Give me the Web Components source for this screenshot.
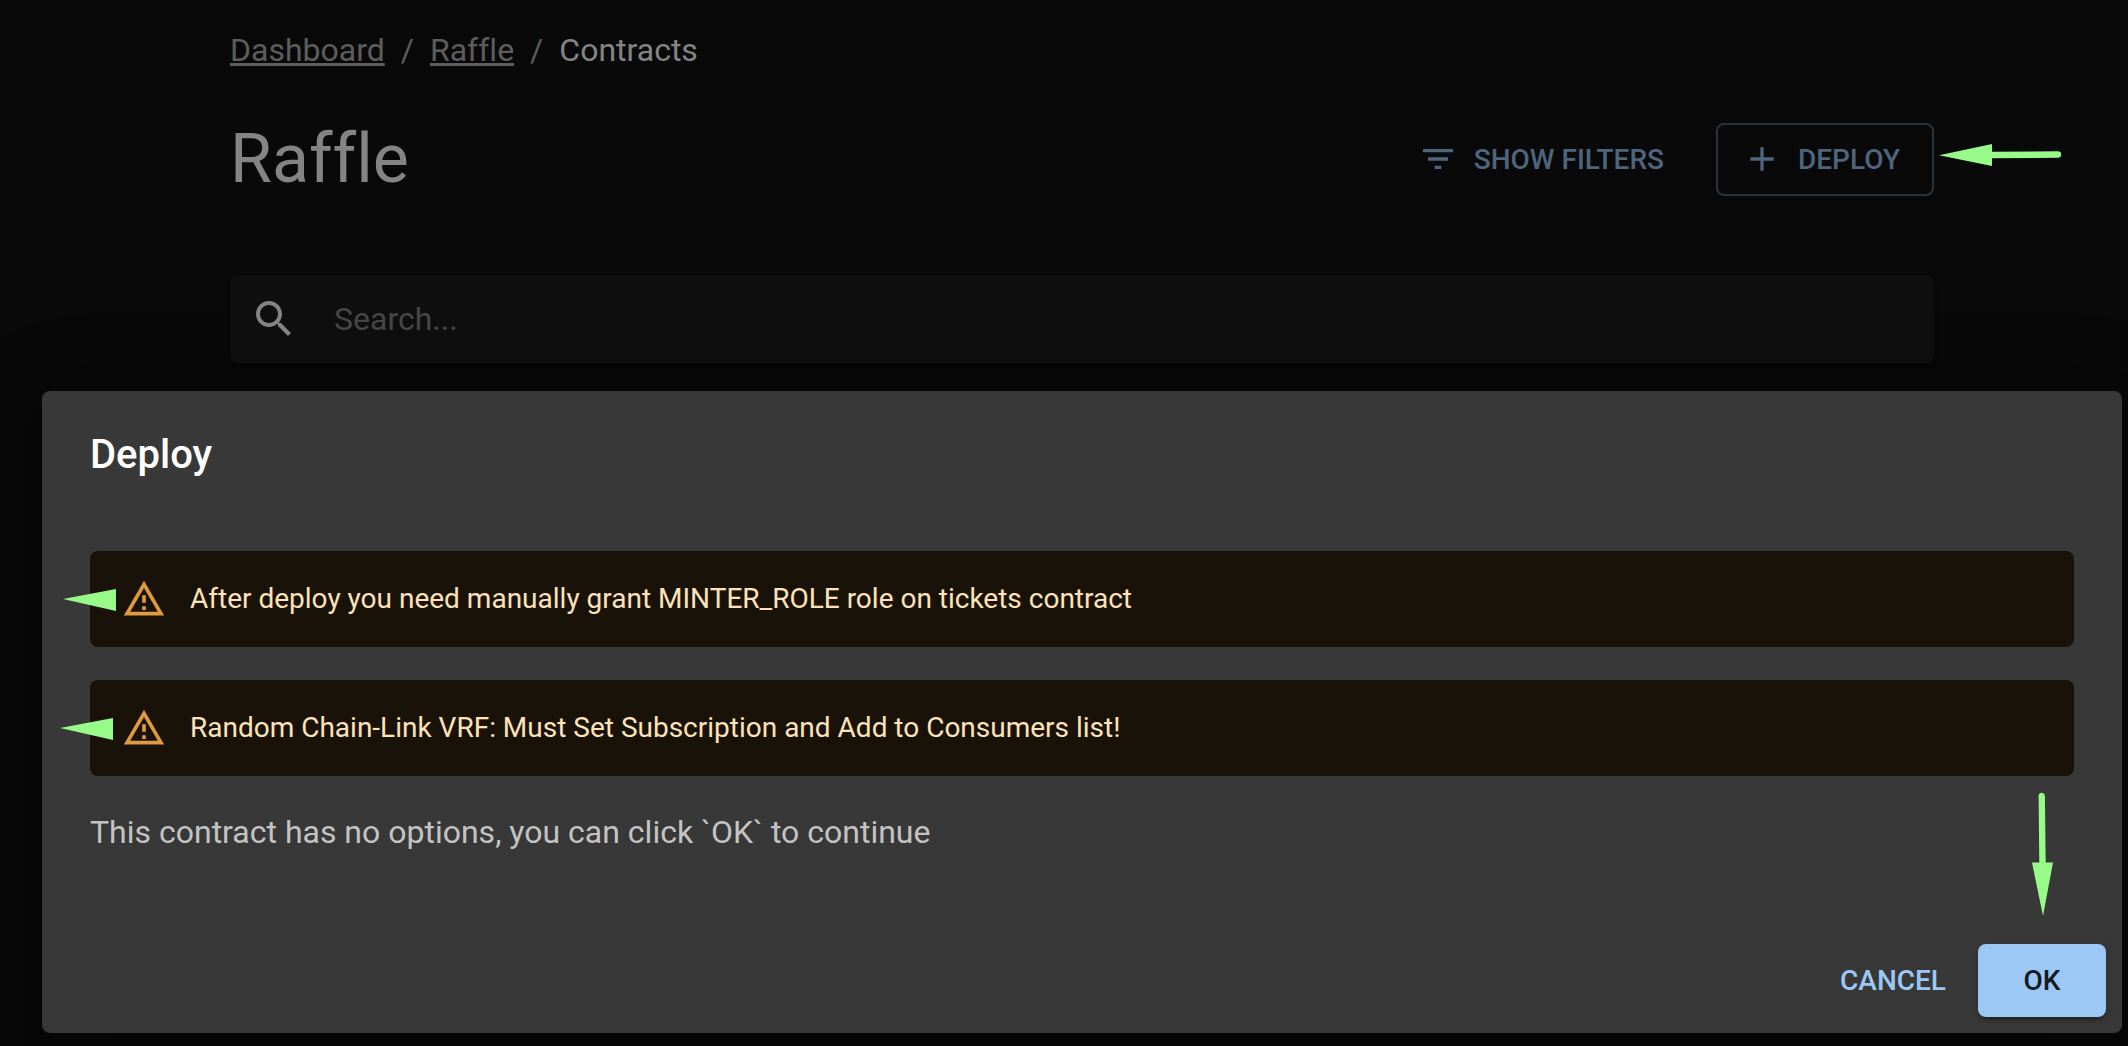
<!DOCTYPE html>
<html lang="en">
<head>
<meta charset="utf-8">
<title>Raffle contracts</title>
<style>
  html { height: 100%; }
  body {
    margin: 0;
    min-height: 100%;
    background: #090909;
    color: #848484;
    font: 400 32px/48px Roboto, "Noto Sans", sans-serif;
    font-variant-ligatures: none;
    overflow: hidden;
  }
</style>
</head>
<body>
<contracts-page></contracts-page>
<script>
const define = (name, html) => {
  const template = document.createElement('template');
  template.innerHTML = html;
  customElements.define(name, class extends HTMLElement {
    constructor() {
      super();
      this.attachShadow({ mode: 'open' }).append(template.content.cloneNode(true));
    }
  });
};

/* Pointer arrows: head only, or head with a shaft, to the left or down. */
const arrows = {
  short: '<svg width="53" height="22" viewBox="0 0 53 22"><path d="M0 10 53 0V22Z"/></svg>',
  left: '<svg width="124" height="22" viewBox="0 0 124 22"><path d="M0 11.3 53 0V22ZM52 7.7 119.500 7.200a3.300 3.300 0 0 1 0 6.500L52 14.300Z"/></svg>',
  down: '<svg width="22" height="124" viewBox="0 0 22 124"><path d="M0 70.600H21L11 124ZM6.600 3.400a3.200 3.200 0 0 1 6.300 0L13.700 72H7.300Z"/></svg>'
};
customElements.define('pointer-arrow', class extends HTMLElement {
  constructor() {
    super();
    this.attachShadow({ mode: 'open' });
  }
  connectedCallback() {
    this.shadowRoot.innerHTML = `
      <style>
        :host { display: block; position: absolute; pointer-events: none; line-height: 0; }
        svg { display: block; fill: #98fb89; }
      </style>${arrows[this.getAttribute('kind')]}`;
  }
});

define('bread-crumbs', `
  <style>
    :host { display: block; }
    ol { display: flex; flex-wrap: wrap; gap: 16px; margin: 0; padding: 0; list-style: none; color: #5d5d5d; }
    a { color: inherit; text-decoration: underline; }
    .current { color: #848484; }
  </style>
  <nav aria-label="Breadcrumb"><ol>
    <li><a href="#dashboard">Dashboard</a></li>
    <li aria-hidden="true">/</li>
    <li><a href="#raffle">Raffle</a></li>
    <li aria-hidden="true">/</li>
    <li class="current">Contracts</li>
  </ol></nav>`);

define('action-button', `
  <style>
    :host { display: block; }
    button {
      display: flex; align-items: center; justify-content: center;
      box-sizing: border-box; width: 100%; min-width: 128px; margin: 0;
      padding: 12px 16px; border: 0; border-radius: 8px;
      background: none; color: #4e657d; cursor: pointer;
      font: 500 28px/49px Roboto, "Noto Sans", sans-serif;
    }
    ::slotted(svg) { display: block; width: 40px; height: 40px; margin: 0 16px 0 -8px; fill: currentColor; }
    :host([variant="outlined"]) button { padding: 10px 32px; border: 2px solid #28333f; }
    :host([variant="light"]) button { color: #9cc8f6; }
    :host([variant="contained"]) button {
      background: #9cc8f6; color: #141a20; padding: 12px 32px;
      box-shadow: 0 6px 2px -4px rgba(0,0,0,.2), 0 4px 4px rgba(0,0,0,.14), 0 2px 10px rgba(0,0,0,.12);
    }
  </style>
  <button type="button"><slot></slot></button>`);

define('page-header', `
  <style>
    :host { display: flex; align-items: center; justify-content: space-between; }
    ::slotted(h1) { margin: 0; font-size: 68px; line-height: 84px; font-weight: 400; }
    .actions { display: flex; align-items: center; gap: 36px; position: relative; }
  </style>
  <slot></slot>
  <div class="actions"><slot name="actions"></slot></div>`);

define('search-bar', `
  <style>
    :host {
      display: flex; align-items: center; border-radius: 8px; background: #0f0f0f;
      box-shadow: 0 4px 2px -2px rgba(0,0,0,.3), 0 2px 4px rgba(0,0,0,.2);
    }
    button { display: block; margin: 0; padding: 20px; border: 0; background: none; color: #848484; }
    svg { display: block; width: 48px; height: 48px; fill: currentColor; }
    input {
      flex: 1; min-width: 0; margin: 0 0 0 16px; padding: 8px 0; border: 0; outline: 0;
      background: none; color: #848484; font: 400 32px/46px Roboto, "Noto Sans", sans-serif;
    }
    input::placeholder { color: #464646; opacity: 1; }
  </style>
  <button type="button" aria-label="Search"><svg viewBox="0 0 24 24"><path d="M15.500 14h-.79l-.28-.27C15.410 12.590 16 11.110 16 9.500 16 5.910 13.090 3 9.500 3S3 5.910 3 9.500 5.910 16 9.500 16c1.610 0 3.090-.59 4.230-1.570l.27.28v.79l5 4.990L20.490 19l-4.990-5zm-6 0C7.010 14 5 11.990 5 9.500S7.010 5 9.500 5 14 7.010 14 9.500 11.990 14 9.500 14z"/></svg></button>
  <input type="text" placeholder="Search..." aria-label="Search">`);

define('warning-alert', `
  <style>
    :host {
      display: flex; align-items: center; position: relative; gap: 24px;
      padding: 12px 32px; border-radius: 8px; background: #191209;
      color: #fee2b8; font-size: 28px; line-height: 40px;
    }
    svg { display: block; flex: none; width: 44px; height: 44px; fill: #df9b3b; }
    .message { padding: 16px 0; }
  </style>
  <svg viewBox="0 0 24 24" aria-hidden="true"><path d="M12 5.990L19.530 19H4.470L12 5.990M12 2L1 21h22L12 2zm1 14h-2v2h2v-2zm0-6h-2v4h2v-4z"/></svg>
  <div class="message"><slot></slot></div>
  <slot name="pointer"></slot>`);

define('deploy-dialog', `
  <style>
    :host {
      display: block; border-radius: 8px; background: #383838; color: #c3c3c3;
      box-shadow: 0 22px 30px -14px rgba(0,0,0,.2), 0 48px 76px 6px rgba(0,0,0,.14), 0 18px 92px 16px rgba(0,0,0,.12);
    }
    h2 { margin: 0; padding: 32px 48px; color: #fff; font-size: 40px; line-height: 64px; font-weight: 500; }
    .content { padding: 32px 48px 72px; }
    .alerts { display: flex; flex-direction: column; gap: 33px; }
    p { margin: 32px 0 0; }
    .actions { display: flex; justify-content: flex-end; gap: 16px; padding: 16px; position: relative; }
    .first { left: -27px; top: 38px; }
    .second { left: -30px; top: 38px; }
    .ok { right: 68px; bottom: 117px; }
  </style>
  <section role="dialog" aria-labelledby="title">
    <h2 id="title">Deploy</h2>
    <div class="content">
      <div class="alerts">
        <warning-alert>After deploy you need manually grant MINTER_ROLE role on tickets contract<pointer-arrow slot="pointer" class="first" kind="short"></pointer-arrow></warning-alert>
        <warning-alert>Random Chain-Link VRF: Must Set Subscription and Add to Consumers list!<pointer-arrow slot="pointer" class="second" kind="short"></pointer-arrow></warning-alert>
      </div>
      <p>This contract has no options, you can click \`OK\` to continue</p>
    </div>
    <div class="actions">
      <action-button variant="light">CANCEL</action-button>
      <action-button variant="contained">OK</action-button>
      <pointer-arrow class="ok" kind="down"></pointer-arrow>
    </div>
  </section>`);

define('contracts-page', `
  <style>
    :host { display: block; }
    main { padding: 26px 194px 28px 230px; }
    page-header { margin: 43px 0 74px; }
    deploy-dialog { margin: 0 6px 0 42px; }
    .deploy { left: calc(100% + 5px); top: 21px; }
  </style>
  <main>
    <bread-crumbs></bread-crumbs>
    <page-header>
      <h1>Raffle</h1>
      <action-button slot="actions"><svg viewBox="0 0 24 24" aria-hidden="true"><path d="M10 18h4v-2h-4v2zM3 6v2h18V6H3zm3 7h12v-2H6v2z"/></svg>SHOW FILTERS</action-button>
      <action-button slot="actions" variant="outlined"><svg viewBox="0 0 24 24" aria-hidden="true"><path d="M19 13h-6v6h-2v-6H5v-2h6V5h2v6h6v2z"/></svg>DEPLOY</action-button>
      <pointer-arrow slot="actions" class="deploy" kind="left"></pointer-arrow>
    </page-header>
    <search-bar></search-bar>
  </main>
  <deploy-dialog></deploy-dialog>`);
</script>
</body>
</html>
